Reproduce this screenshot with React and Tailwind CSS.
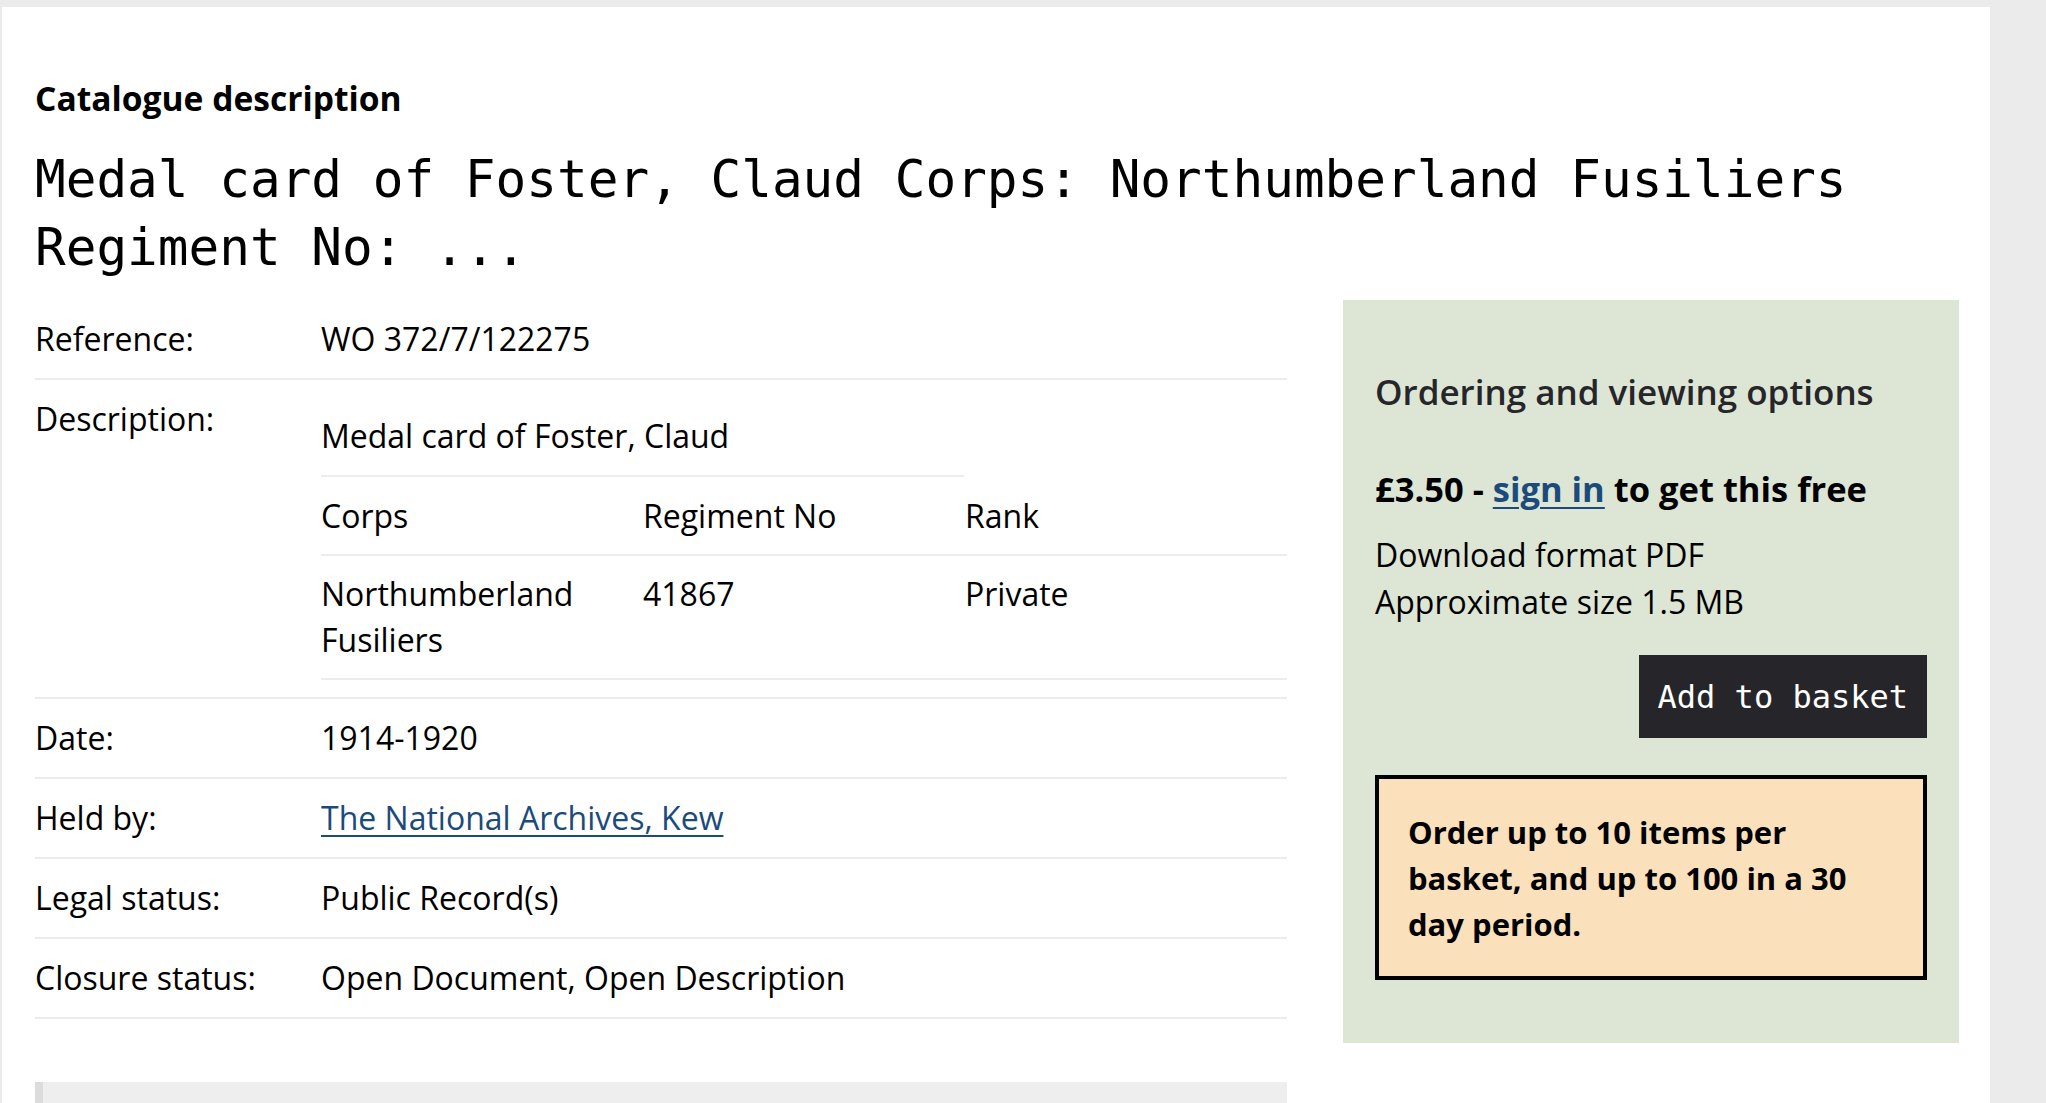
/**
 * Catalogue record page: description table and ordering options panel
 */

const rows = [
  { label: "Date:", value: "1914-1920" },
  { label: "Held by:", value: "The National Archives, Kew", link: true },
  { label: "Legal status:", value: "Public Record(s)" },
  { label: "Closure status:", value: "Open Document, Open Description" },
]

const Row = ({ label, children }) => (
  <div className="flex border-b-2 border-[#ececec]">
    <div className="w-[286px] shrink-0 py-[15px]">{label}</div>
    <div className="flex-1 py-[15px]">{children}</div>
  </div>
)

export default function App() {
  return (
    <div className="min-h-screen bg-[#ebebeb] pt-[7px] pl-[2px] font-['Open_Sans',sans-serif] text-black">
      <div className="w-[1988px] min-h-[1096px] bg-white pl-[33px] pt-[66px] pb-10">
        <h2 className="text-[33.6px] leading-[51px] font-bold">Catalogue description</h2>
        <h1 className="mt-[22px] max-w-[1924px] font-['DejaVu_Sans_Mono',monospace] text-[51px] leading-[68px] font-normal">
          Medal card of Foster, Claud Corps: Northumberland Fusiliers Regiment No: ...
        </h1>

        <div className="mt-[18px] flex gap-[56px] items-start">
          {/* Record details */}
          <div className="w-[1252px] text-[32px] leading-[48px]">
            <Row label="Reference:">WO 372/7/122275</Row>
            <div className="flex border-b-2 border-[#ececec]">
              <div className="w-[286px] shrink-0 py-[15px]">Description:</div>
              <div className="flex-1 pt-[15px] pb-[17px]">
                <p className="w-[643px] pt-[17px] pb-[15px] border-b-2 border-[#ececec]">
                  Medal card of Foster, Claud
                </p>
                <div className="grid grid-cols-3 border-b-2 border-[#ececec]">
                  <div className="pt-[15px] pb-[14px]">Corps</div>
                  <div className="pt-[15px] pb-[14px]">Regiment No</div>
                  <div className="pt-[15px] pb-[14px]">Rank</div>
                </div>
                <div className="grid grid-cols-3 border-b-2 border-[#ececec] leading-[46px]">
                  <div className="py-[15px] pr-6">Northumberland Fusiliers</div>
                  <div className="py-[15px]">41867</div>
                  <div className="py-[15px]">Private</div>
                </div>
              </div>
            </div>
            {rows.map((r) => (
              <Row key={r.label} label={r.label}>
                {r.link ? (
                  <a href="#" className="text-[#1b4b7b] underline underline-offset-[5px] decoration-2">
                    {r.value}
                  </a>
                ) : (
                  r.value
                )}
              </Row>
            ))}

            <div className="mt-[63px] h-[120px] bg-[#eeeeee] border-l-8 border-[#dcdcdc]"></div>
          </div>

          {/* Ordering panel */}
          <aside className="w-[616px] bg-[#dde5d5] px-8 pt-[66px] pb-[63px]">
            <h3 className="text-[35px] leading-[51px] font-semibold text-[#26262a]">
              Ordering and viewing options
            </h3>
            <p className="mt-[48px] text-[34.5px] leading-[48px] font-bold">
              £3.50 -{" "}
              <a href="#" className="text-[#1b4b7b] underline underline-offset-[5px] decoration-2">
                sign in
              </a>{" "}
              to get this free
            </p>
            <p className="mt-[18px] text-[32px] leading-[47px]">
              Download format PDF
              <br />
              Approximate size 1.5 MB
            </p>
            <div className="mt-[30px] flex justify-end">
              <button className="h-[83px] px-[19px] bg-[#26262a] text-white font-['DejaVu_Sans_Mono',monospace] text-[32px]">
                Add to basket
              </button>
            </div>
            <div className="mt-[37px] border-4 border-black bg-[#fbe0bc] px-[29px] pt-[30px] pb-[29px] text-[31px] leading-[46px] font-bold">
              Order up to 10 items per basket, and up to 100 in a 30 day period.
            </div>
          </aside>
        </div>
      </div>
    </div>
  )
}
